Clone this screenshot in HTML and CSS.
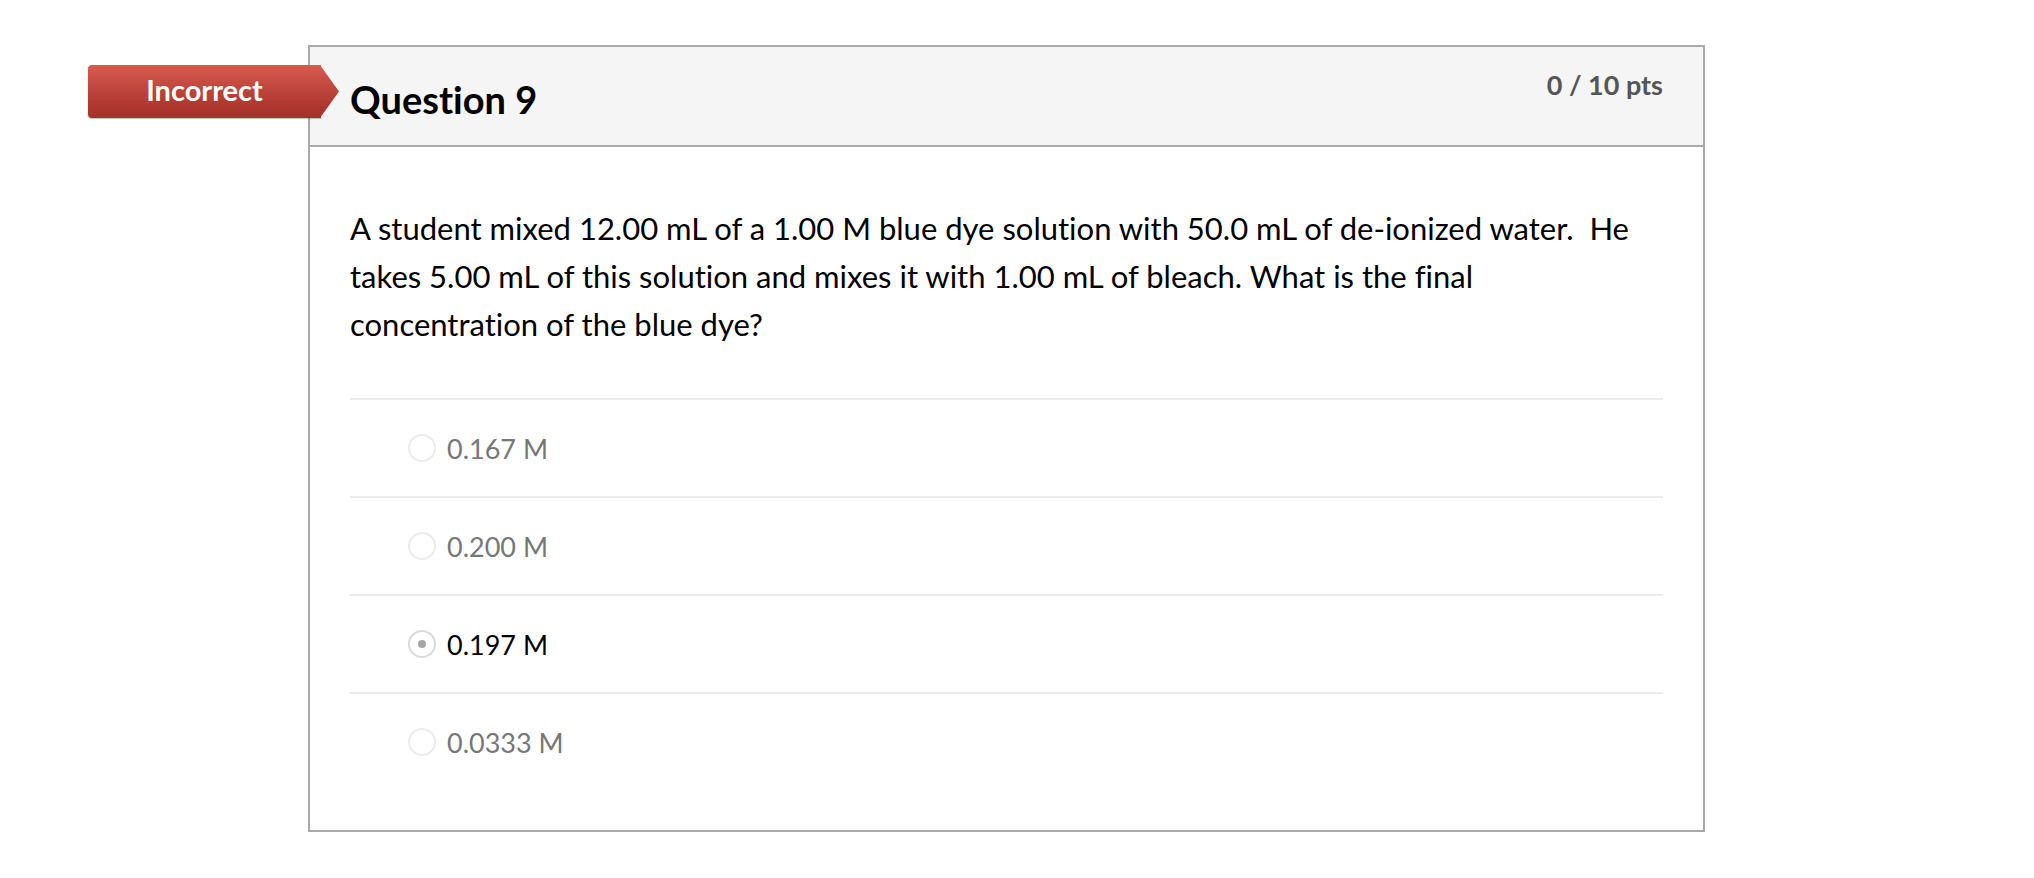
FILE: index.html
```html
<!DOCTYPE html>
<html lang="en">
<head>
<meta charset="utf-8">
<title>Question 9</title>
<link rel="stylesheet" href="styles.css">
</head>
<body>
<div class="page">
  <div class="question">
    <div class="flag">Incorrect</div>
    <div class="q-header">
      <h2 class="q-title">Question 9</h2>
      <div class="q-points">0 / 10 pts</div>
    </div>
    <div class="q-body">
      <p class="q-text">A student mixed 12.00 mL of a 1.00 M blue dye solution with 50.0 mL of de-ionized water.&nbsp; He takes 5.00 mL of this solution and mixes it with 1.00 mL of bleach. What is the final concentration of the blue dye?</p>
      <div class="answers">
        <div class="answer"><span class="radio"></span><span class="answer-text">0.167 M</span></div>
        <div class="answer"><span class="radio"></span><span class="answer-text">0.200 M</span></div>
        <div class="answer selected"><span class="radio"></span><span class="answer-text">0.197 M</span></div>
        <div class="answer"><span class="radio"></span><span class="answer-text">0.0333 M</span></div>
      </div>
    </div>
  </div>
</div>
</body>
</html>
```

FILE: styles.css
```css
* { box-sizing: border-box; }
html, body { margin: 0; padding: 0; background: #fff; }
body {
  font-family: Lato, "Open Sans", "Liberation Sans", sans-serif;
  color: #000;
  font-variant-ligatures: no-common-ligatures;
}
.page {
  padding: 45px 0 0 308px;
}
.question {
  position: relative;
  width: 1397px;
  border: 2px solid #a9a9a9;
  background: #fff;
}
.flag {
  position: absolute;
  left: -222px;
  top: 18px;
  width: 233px;
  height: 53px;
  background: linear-gradient(#d75b50, #b23a30 70%, #a3322a);
  border-radius: 4px 0 0 4px;
  color: #fff;
  font-size: 29px;
  font-weight: 700;
  display: flex;
  align-items: center;
  justify-content: center;
  padding-bottom: 4px;
  box-shadow: 0 1px 1px rgba(0,0,0,0.25);
}
.flag::after {
  content: "";
  position: absolute;
  top: 0;
  right: -18px;
  width: 19px;
  height: 53px;
  background: linear-gradient(#d75b50, #b23a30 70%, #a3322a);
  clip-path: polygon(0 0, 100% 50%, 0 100%);
}
.q-header {
  display: flex;
  justify-content: space-between;
  align-items: flex-start;
  background: #f5f5f5;
  border-bottom: 2px solid #a9a9a9;
  height: 100px;
  padding: 22px 40px 0 40px;
}
.q-title {
  margin: 8px 0 0 0;
  font-size: 38px;
  font-weight: 700;
  line-height: 1.2;
}
.q-points {
  font-size: 27px;
  font-weight: 700;
  color: #555;
  line-height: 1.2;
}
.q-body {
  padding: 57px 40px 40px 40px;
}
.q-text {
  margin: 0 0 50px 0;
  font-size: 31px;
  line-height: 48px;
}
.answer {
  display: flex;
  align-items: center;
  height: 98px;
  border-top: 2px solid #ebebeb;
  padding-left: 58px;
}
.radio {
  width: 28px;
  height: 28px;
  border-radius: 50%;
  border: 2px solid #ebebeb;
  background: #fff;
  margin-right: 11px;
  display: flex;
  align-items: center;
  justify-content: center;
  flex: none;
}
.selected .radio {
  border-color: #dadada;
}
.selected .radio::after {
  content: "";
  width: 8px;
  height: 8px;
  border-radius: 50%;
  background: #a6a6a6;
}
.answer-text {
  font-size: 27px;
  color: #777;
}
.selected .answer-text {
  color: #000;
}
```
